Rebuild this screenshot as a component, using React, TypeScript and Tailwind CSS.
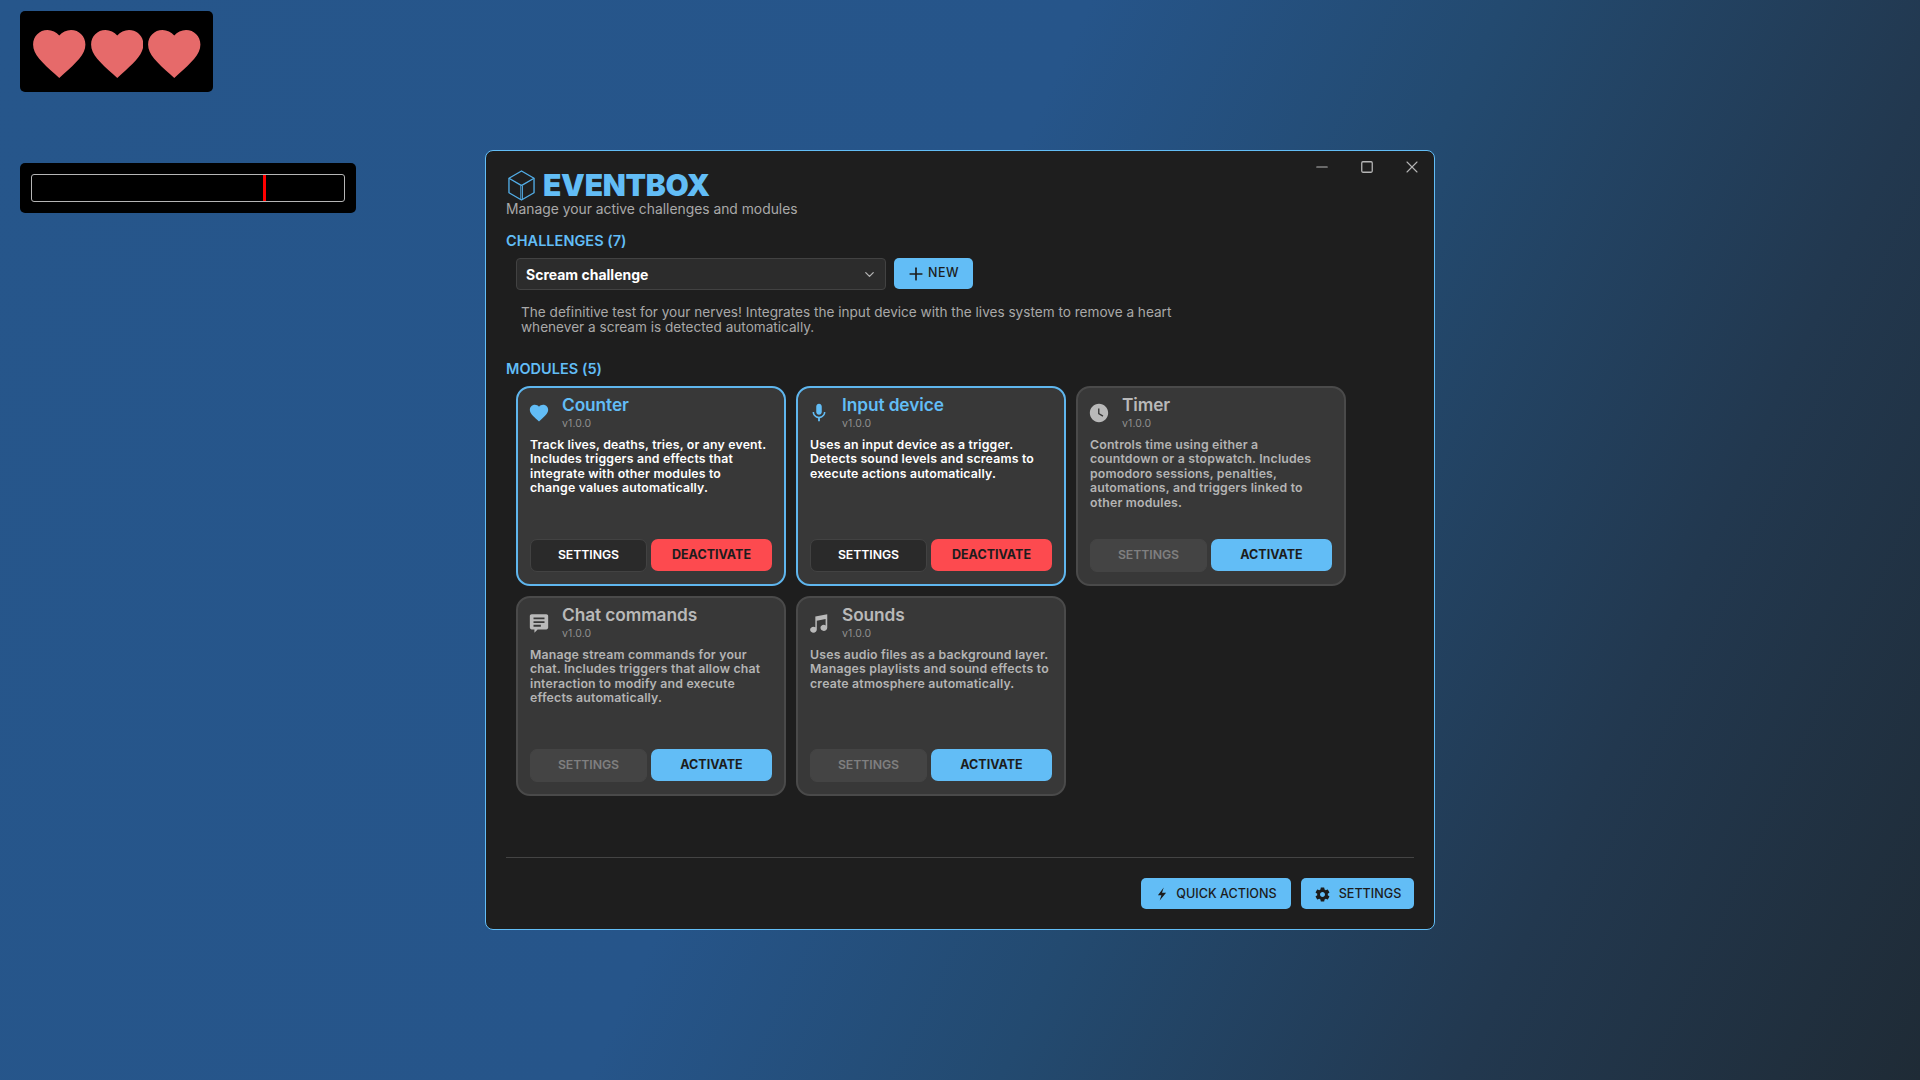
import React from "react";
import { Plus, ChevronDown, X, Minus, Square } from "lucide-react";

const HEART = "M12 21.35l-1.45-1.32C5.4 15.36 2 12.28 2 8.5 2 5.42 4.42 3 7.5 3c1.74 0 3.41.81 4.5 2.09C13.09 3.81 14.76 3 16.5 3 19.58 3 22 5.42 22 8.5c0 3.78-3.4 6.86-8.55 11.54L12 21.35z";

function HeartBig() {
  return (
    <svg viewBox="2 3 20 18.35" className="w-[52.5px] h-[48px]" fill="#e66a6a">
      <path d={HEART} />
    </svg>
  );
}

function Cube() {
  return (
    <svg viewBox="0 0 28 32" className="w-[27px] h-[31px]" fill="none" stroke="#52ade6" strokeWidth="1.4" strokeLinejoin="round">
      <path d="M14 1 L27 8.5 V23.5 L14 31 L1 23.5 V8.5 Z" />
      <path d="M1 8.5 L12.8 15.4 Q14 16.1 15.200 15.4 L27 8.5" />
      <path d="M13.300 16 V30.500 M15 16 V30" strokeWidth="1" />
    </svg>
  );
}

const icons: Record<string, React.ReactNode> = {
  heart: <path d={HEART} />,
  mic: (
    <path d="M12 14c1.66 0 3-1.34 3-3V5c0-1.66-1.34-3-3-3S9 3.34 9 5v6c0 1.66 1.34 3 3 3zm5.3-3c0 3-2.54 5.1-5.3 5.1S6.7 14 6.7 11H5c0 3.41 2.72 6.23 6 6.72V21h2v-3.28c3.28-.48 6-3.3 6-6.72h-1.7z" />
  ),
  clock: (
    <path d="M12 2C6.5 2 2 6.5 2 12s4.5 10 10 10 10-4.500 10-10S17.500 2 12 2zm3.900 14.200L11 13V7h1.500v5.200l4.200 2.500-.8 1.500z" />
  ),
  chat: (
    <path d="M4 2.500h16c1.100 0 2 .9 2 2v12.500c0 1.100-.9 2-2 2h-9.500L7 22.500V19H4c-1.100 0-2-.9-2-2V4.500c0-1.100.9-2 2-2zm2 3.500v2h12V6H6zm0 4v2h12v-2H6zm0 4v2h8v-2H6z" />
  ),
  music: (
    <path d="M21 2.500 8 5v11.600A3.600 3.600 0 0 0 6 16c-2 0-3.700 1.500-3.700 3.300S4 22.500 6 22.500s3.600-1.500 3.600-3.400V9.500l9.600-1.800v6.900a3.600 3.600 0 0 0-2-.6c-2 0-3.600 1.500-3.600 3.300s1.600 3.300 3.600 3.300 3.800-1.500 3.800-3.500V2.500z" />
  ),
};

type Mod = {
  name: string;
  icon: string;
  lines: string[];
  active: boolean;
};

function ModuleCard({ name, icon, lines, active }: Mod) {
  return (
    <div
      className={
        "w-[270px] h-[200px] rounded-[14px] border-2 bg-[#383838] pt-[7px] pl-[12px] pr-[12px] pb-[12px] flex flex-col " +
        (active ? "border-[#5fb6ee]" : "border-[#4a4a4a]")
      }
    >
      <div className="flex items-center h-[33px]">
        <div className="w-[32px] shrink-0 pt-[3px]">
          <svg
            viewBox="0 0 24 24"
            className="w-[22px] h-[22px] -ml-[2px]"
            fill={active ? "#62bdf6" : "#b9b9b9"}
          >
            {icons[icon]}
          </svg>
        </div>
        <div className="flex flex-col pt-[3px]">
          <span
            className={
              "text-[17.3px] leading-[20px] font-semibold tracking-[-0.005em] " +
              (active ? "text-[#62bdf6]" : "text-[#b9b9b9]")
            }
          >
            {name}
          </span>
          <span className="pt-[2px] text-[10.5px] leading-[14px] tracking-[0.01em] text-[#8f8f8f] font-normal">v1.0.0</span>
        </div>
      </div>
      <p
        className={
          "mt-[10px] text-[12.3px] leading-[14.4px] font-semibold tracking-[0.015em] whitespace-nowrap " +
          (active ? "text-white" : "text-[#b4b4b4]")
        }
      >
        {lines.map((l) => (
          <span key={l} className="block">
            {l}
          </span>
        ))}
      </p>
      <div className="mt-auto flex gap-[4px]">
        <button
          className={
            "w-[117px] h-[33px] rounded-[7px] text-[12.3px] font-semibold tracking-[-0.005em] border flex items-center justify-center " +
            (active
              ? "bg-[#2a2a2a] border-[#424242] text-white"
              : "bg-[#444444] border-[#444444] text-[#7f7f7f]")
          }
        >
          SETTINGS
        </button>
        <button
          className={
            "w-[121px] h-[32px] rounded-[7px] text-[12.5px] font-bold tracking-normal flex items-center justify-center text-[#1c1c1c] " +
            (active ? "bg-[#fd4a4f]" : "bg-[#62bdf6]")
          }
        >
          {active ? "DEACTIVATE" : "ACTIVATE"}
        </button>
      </div>
    </div>
  );
}

const modules: Mod[] = [
  {
    name: "Counter",
    icon: "heart",
    active: true,
    lines: ["Track lives, deaths, tries, or any event.", "Includes triggers and effects that", "integrate with other modules to", "change values automatically."],
  },
  {
    name: "Input device",
    icon: "mic",
    active: true,
    lines: ["Uses an input device as a trigger.", "Detects sound levels and screams to", "execute actions automatically."],
  },
  {
    name: "Timer",
    icon: "clock",
    active: false,
    lines: ["Controls time using either a", "countdown or a stopwatch. Includes", "pomodoro sessions, penalties,", "automations, and triggers linked to", "other modules."],
  },
  {
    name: "Chat commands",
    icon: "chat",
    active: false,
    lines: ["Manage stream commands for your", "chat. Includes triggers that allow chat", "interaction to modify and execute", "effects automatically."],
  },
  {
    name: "Sounds",
    icon: "music",
    active: false,
    lines: ["Uses audio files as a background layer.", "Manages playlists and sound effects to", "create atmosphere automatically."],
  },
];

export default function App() {
  return (
    <div className="relative w-[1920px] h-[1080px] overflow-hidden font-['Inter',sans-serif] bg-[linear-gradient(115deg,#26568b_0%,#26558a_45%,#234a70_62%,#22384f_81%,#1f2b36_100%)]">
      {/* hearts overlay */}
      <div className="absolute left-[20px] top-[11px] w-[193px] h-[81px] bg-black rounded-[5px] flex items-start gap-[5px] pl-[13px] pt-[19px]">
        <HeartBig />
        <HeartBig />
        <HeartBig />
      </div>

      {/* scream bar overlay */}
      <div className="absolute left-[20px] top-[163px] w-[336px] h-[50px] bg-black rounded-[5px] p-[11px]">
        <div className="relative w-[314px] h-[28px] border-[1.5px] border-[#b5b5b5] rounded-[3px]">
          <div className="absolute left-[231px] top-0 w-[3px] h-full bg-[#ff0000]" />
        </div>
      </div>

      {/* window */}
      <div className="absolute left-[485px] top-[150px] w-[950px] h-[780px] bg-[#1e1e1e] border border-[#62bdf6] rounded-[8px] px-[20px] flex flex-col">
        <div className="absolute right-[12px] top-[6px] flex items-center gap-[25px] text-[#b5b5b5]">
          <Minus size={18} strokeWidth={1.5} className="mr-[1px]" />
          <Square size={14} strokeWidth={2.2} className="mx-[3px]" />
          <X size={20} strokeWidth={1.3} />
        </div>

        <div className="flex items-center gap-[8px] h-[32px] mt-[18px] ml-[2px]">
          <Cube />
          <span className="text-[30px] leading-[32px] font-black tracking-[-0.01em] text-[#62bdf6]">EVENTBOX</span>
        </div>
        <p className="text-[13.85px] leading-[16px] text-[#a9a9a9]">
          Manage your active challenges and modules
        </p>

        <h2 className="mt-[15px] text-[14.5px] leading-[18px] font-semibold tracking-[0.002em] text-[#62bdf6]">CHALLENGES (7)</h2>

        <div className="flex items-start gap-[8px] ml-[10px] mt-[8px]">
          <div className="w-[370px] h-[32px] rounded-[4px] bg-[#2c2c2c] border border-[#424242] flex items-center justify-between pl-[9px] pr-[8px]">
            <span className="text-[14px] font-bold tracking-normal text-white">Scream challenge</span>
            <ChevronDown size={15} className="text-[#b5b5b5]" />
          </div>
          <button className="w-[79px] h-[31px] rounded-[5px] bg-[#62bdf6] text-[#1c1c1c] flex items-center justify-center gap-[2px] text-[12.5px] font-medium tracking-[0.04em] pr-[2px]">
            <Plus size={20} strokeWidth={2} />
            NEW
          </button>
        </div>

        <p className="ml-[15px] mt-[15px] w-[690px] text-[13.6px] leading-[15px] text-[#a9a9a9]">
          The definitive test for your nerves! Integrates the input device with the lives system to remove a heart whenever a scream is detected automatically.
        </p>

        <h2 className="mt-[25px] text-[14.5px] leading-[18px] font-semibold tracking-[0.002em] text-[#62bdf6]">MODULES (5)</h2>

        <div className="ml-[10px] mt-[8px] grid grid-cols-[270px_270px_270px] gap-[10px]">
          {modules.map((m) => (
            <ModuleCard key={m.name} {...m} />
          ))}
        </div>

        <div className="mt-[61px] border-t border-[#444444]" />

        <div className="mt-[20px] flex justify-end gap-[10px]">
          <button className="w-[150px] h-[31px] rounded-[5px] bg-[#62bdf6] text-[#1c1c1c] flex items-center justify-center gap-[7px] text-[12.6px] font-medium pt-[1px]">
            <svg viewBox="0 0 24 24" className="w-[14px] h-[14px]" fill="#1c1c1c">
              <path d="M15 1 5 14h6l-3 9 11-13h-7l3-9z" />
            </svg>
            QUICK ACTIONS
          </button>
          <button className="w-[113px] h-[31px] rounded-[5px] bg-[#62bdf6] text-[#1c1c1c] flex items-center justify-center gap-[8px] text-[12.6px] font-medium pt-[1px]">
            <svg viewBox="0 0 24 24" className="w-[17px] h-[17px]" fill="#1c1c1c">
              <path d="M19.430 12.980c.040-.320.070-.640.070-.980s-.030-.660-.070-.980l2.110-1.650c.190-.150.240-.420.120-.640l-2-3.460c-.120-.220-.390-.300-.610-.220l-2.490 1c-.520-.400-1.080-.730-1.690-.980l-.380-2.650A.488.488 0 0 0 14 2h-4c-.250 0-.460.180-.490.420l-.380 2.650c-.610.250-1.170.590-1.690.980l-2.490-1c-.230-.090-.490 0-.610.220l-2 3.460c-.130.220-.070.490.120.640l2.110 1.650c-.040.320-.070.650-.070.980s.030.660.070.980l-2.110 1.650c-.190.150-.240.420-.120.640l2 3.460c.120.220.390.300.610.220l2.490-1c.520.400 1.080.730 1.690.980l.380 2.650c.030.240.240.420.490.420h4c.250 0 .460-.180.490-.420l.380-2.650c.610-.250 1.170-.590 1.690-.980l2.490 1c.230.090.490 0 .610-.220l2-3.460c.120-.220.070-.490-.120-.640l-2.110-1.650zM12 15.500c-1.930 0-3.500-1.570-3.500-3.500s1.570-3.500 3.500-3.500 3.500 1.570 3.500 3.500-1.570 3.500-3.500 3.500z" />
            </svg>
            SETTINGS
          </button>
        </div>
      </div>
    </div>
  );
}
